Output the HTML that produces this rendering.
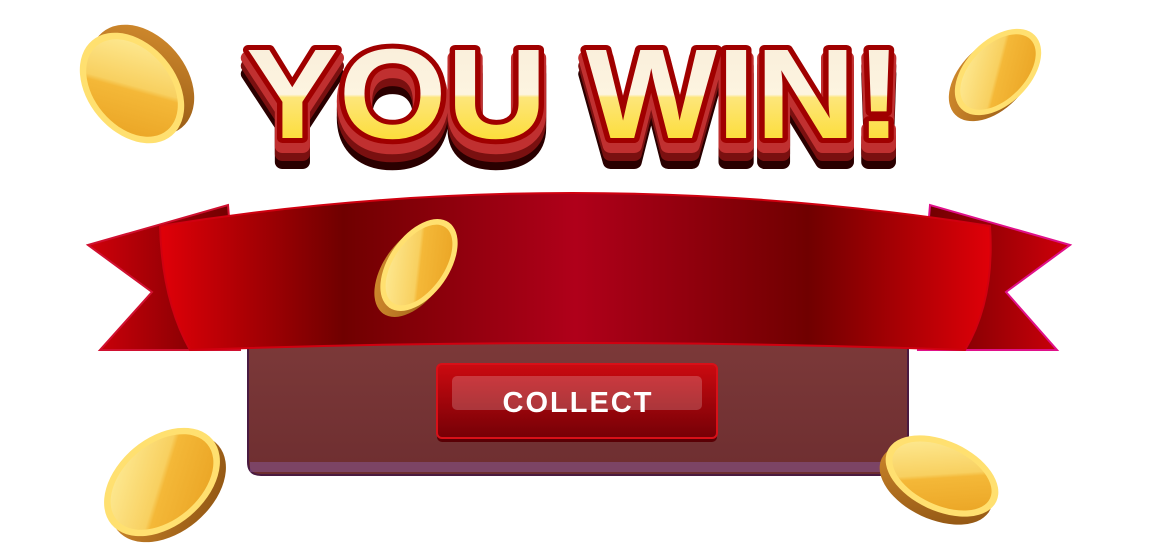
<!DOCTYPE html>
<html><head><meta charset="utf-8"><style>
html,body{margin:0;padding:0;background:#fff;width:1158px;height:547px;overflow:hidden}
svg{display:block}
</style></head><body>
<svg width="1158" height="547" viewBox="0 0 1158 547" xmlns="http://www.w3.org/2000/svg">
<defs>
<linearGradient id="band" x1="0" x2="1" y1="0" y2="0">
<stop offset="0" stop-color="#e00008"/><stop offset="0.22" stop-color="#700000"/>
<stop offset="0.5" stop-color="#b0001a"/><stop offset="0.78" stop-color="#700000"/>
<stop offset="1" stop-color="#e00008"/></linearGradient>
<linearGradient id="tailL" x1="0" x2="1"><stop offset="0" stop-color="#d0000a"/><stop offset="1" stop-color="#6a0000"/></linearGradient>
<linearGradient id="tailR" x1="1" x2="0"><stop offset="0" stop-color="#d0000a"/><stop offset="1" stop-color="#6a0000"/></linearGradient>
<linearGradient id="panel" x1="0" y1="0" x2="0" y2="1"><stop offset="0" stop-color="#7d3a3a"/><stop offset="1" stop-color="#6e2e30"/></linearGradient>
<linearGradient id="btn" x1="0" y1="0" x2="0" y2="1"><stop offset="0" stop-color="#cc0a10"/><stop offset="1" stop-color="#750006"/></linearGradient>
<linearGradient id="txt" x1="0" y1="0" x2="0" y2="1"><stop offset="0" stop-color="#f8ecd8"/><stop offset="0.5" stop-color="#fdf4e0"/><stop offset="0.52" stop-color="#fde67a"/><stop offset="1" stop-color="#fcd814"/></linearGradient>
<linearGradient id="gold" x1="0" y1="0" x2="1" y2="1"><stop offset="0" stop-color="#fff0a0"/><stop offset="0.48" stop-color="#f8d060"/><stop offset="0.52" stop-color="#f4b838"/><stop offset="1" stop-color="#e8a020"/></linearGradient>
<linearGradient id="rim" x1="0" y1="0" x2="1" y2="1"><stop offset="0" stop-color="#d89030"/><stop offset="1" stop-color="#8a5010"/></linearGradient>
</defs>

<!-- title -->
<g font-family="Liberation Sans, sans-serif" font-weight="900" font-size="128">
<text x="246" y="162" textLength="656" lengthAdjust="spacingAndGlyphs" fill="#2a0000" stroke="#2a0000" stroke-width="14" stroke-linejoin="round">YOU WIN!</text>
<text x="246" y="154" textLength="656" lengthAdjust="spacingAndGlyphs" fill="#7a1010" stroke="#7a1010" stroke-width="14" stroke-linejoin="round">YOU WIN!</text>
<text x="246" y="146" textLength="656" lengthAdjust="spacingAndGlyphs" fill="#c03030" stroke="#c03030" stroke-width="14" stroke-linejoin="round">YOU WIN!</text>
<text x="246" y="138" textLength="656" lengthAdjust="spacingAndGlyphs" fill="url(#txt)" stroke="#a00000" stroke-width="10" stroke-linejoin="round" paint-order="stroke">YOU WIN!</text>
</g>

<!-- panel -->
<path d="M248 330 H908 V462 Q908 475 895 475 H261 Q248 475 248 462 Z" fill="url(#panel)" stroke="#4a1a40" stroke-width="2"/>
<rect x="250" y="462" width="656" height="10" fill="#8a5a9a" opacity="0.5"/>

<!-- tails -->
<path d="M88 245 L228 205 L240 350 L100 350 L152 292 Z" fill="url(#tailL)" stroke="#d01030" stroke-width="2"/>
<path d="M1070 245 L930 205 L918 350 L1057 350 L1006 292 Z" fill="url(#tailR)" stroke="#e0108a" stroke-width="2"/>
<!-- band -->
<path d="M160 226 Q570 160 990 226 Q995 300 965 350 Q570 336 190 350 Q162 300 160 226 Z" fill="url(#band)" stroke="#d00010" stroke-width="2"/>

<!-- button -->
<rect x="437" y="368" width="280" height="74" rx="5" fill="#5a0005"/>
<rect x="437" y="364" width="280" height="74" rx="5" fill="url(#btn)" stroke="#d81018" stroke-width="2"/>
<rect x="452" y="376" width="250" height="34" rx="5" fill="#ffffff" opacity="0.2"/>
<text x="578" y="412" text-anchor="middle" font-family="Liberation Sans, sans-serif" font-weight="bold" font-size="29" fill="#fff" letter-spacing="2">COLLECT</text>

<!-- coins -->
<g transform="translate(132,88)">
<ellipse rx="62" ry="44" transform="translate(10,-8) rotate(50)" fill="url(#rim)"/>
<ellipse rx="62" ry="44" transform="rotate(50)" fill="#ffe070"/>
<ellipse rx="55" ry="38" transform="rotate(50)" fill="url(#gold)"/>
</g>
<g transform="translate(998,72)">
<ellipse rx="52" ry="32" transform="translate(-6,6) rotate(-45)" fill="url(#rim)"/>
<ellipse rx="52" ry="32" transform="rotate(-45)" fill="#ffe070"/>
<ellipse rx="46" ry="27" transform="rotate(-45)" fill="url(#gold)"/>
</g>
<g transform="translate(419,265)">
<ellipse rx="52" ry="30" transform="translate(-6,6) rotate(-55)" fill="url(#rim)"/>
<ellipse rx="52" ry="30" transform="rotate(-55)" fill="#ffe070"/>
<ellipse rx="46" ry="25" transform="rotate(-55)" fill="url(#gold)"/>
</g>
<g transform="translate(162,482)">
<ellipse rx="66" ry="44" transform="translate(6,6) rotate(-40)" fill="url(#rim)"/>
<ellipse rx="66" ry="44" transform="rotate(-40)" fill="#ffe070"/>
<ellipse rx="59" ry="38" transform="rotate(-40)" fill="url(#gold)"/>
</g>
<g transform="translate(942,476)">
<ellipse rx="60" ry="35" transform="translate(-6,8) rotate(25)" fill="url(#rim)"/>
<ellipse rx="60" ry="35" transform="rotate(25)" fill="#ffe070"/>
<ellipse rx="53" ry="29" transform="rotate(25)" fill="url(#gold)"/>
</g>
</svg>
</body></html>
